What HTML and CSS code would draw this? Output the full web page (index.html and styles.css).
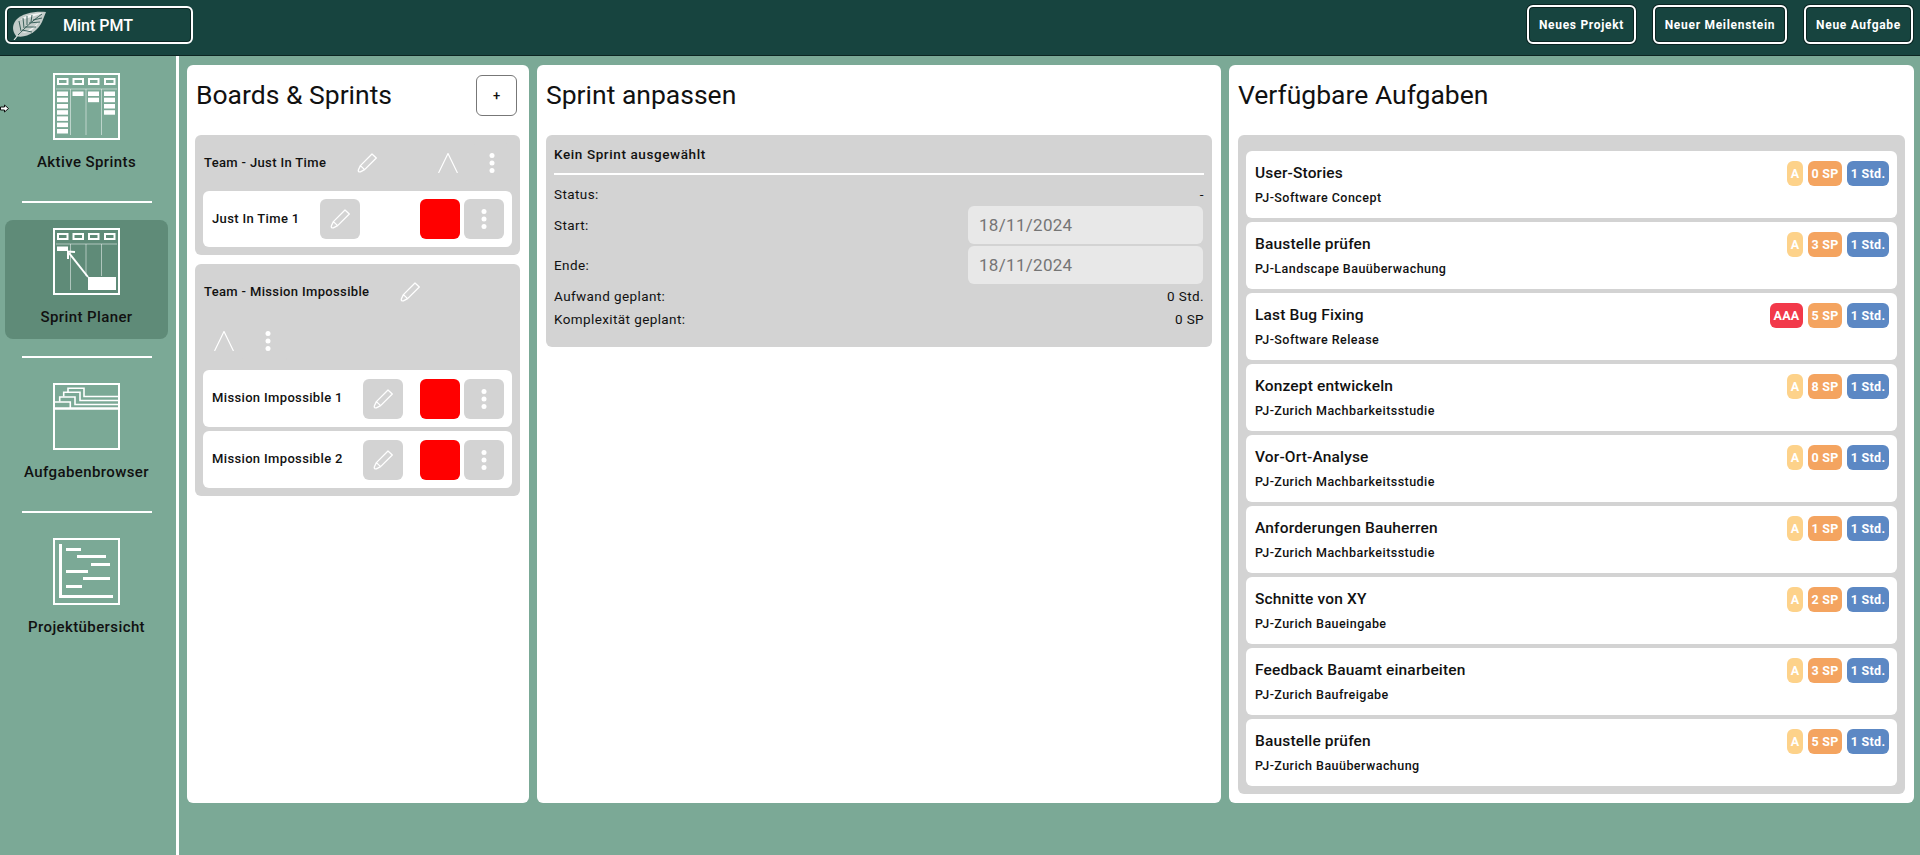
FILE: index.html
```html
<!DOCTYPE html>
<html lang="de">
<head>
  <meta charset="UTF-8" />
  <meta name="viewport" content="width=device-width, initial-scale=1" />
  <title>Mint PMT</title>
  <link rel="stylesheet" href="styles.css">
</head>
<body>

  <!-- shared icons -->
  <svg class="defs" aria-hidden="true">
    <symbol id="pencil" viewBox="0 0 20 20">
      <path d="M15 1 L19.3 5 L7.6 16.6 L3.4 12.6 Z M3.4 12.6 L1.4 16.8 Q0.8 19.4 3.4 18.8 L7.6 16.6" fill="none" stroke="#fff" stroke-width="1.3" stroke-linejoin="round" />
    </symbol>
    <symbol id="chevron" viewBox="0 0 20 20">
      <path d="M0.5 20 L10 0.5 L19.5 20" fill="none" stroke="#fff" stroke-width="1.2" />
    </symbol>
    <symbol id="dots" viewBox="0 0 20 20">
      <circle cx="10" cy="2.5" r="2.5" fill="#fff" />
      <circle cx="10" cy="10" r="2.5" fill="#fff" />
      <circle cx="10" cy="17.5" r="2.5" fill="#fff" />
    </symbol>
    <symbol id="board-head" viewBox="0 0 67 67">
      <rect x="1" y="1" width="65" height="65" fill="none" stroke="#fff" stroke-width="2" />
      <g fill="none" stroke="#fff" stroke-width="2">
        <rect x="5" y="6" width="9.5" height="5" />
        <rect x="20.5" y="6" width="9.5" height="5" />
        <rect x="36" y="6" width="9.5" height="5" />
        <rect x="52" y="6" width="9.5" height="5" />
      </g>
      <path d="M3 16 H64" stroke="#fff" stroke-opacity=".5" stroke-width="1" />
    </symbol>
  </svg>

  <header class="topbar">
    <div class="logo-btn">
      <svg class="leaf" viewBox="0 0 34 29">
        <path d="M34 1 C24 0 10 2 4 9 C0 14 0 20 4 25 C14 28 26 20 30 11 Z" fill="#c3ccc9" />
        <path d="M31 2 C24 2 13 4 8 9 C12 8 20 6 31 2 Z M27 11 C22 16 16 20 10 22 C16 22 23 18 27 11 Z" fill="#f2f5f4" />
        <path d="M2 29 L6 24 C12 18 20 10 30 3 M9 20 L7 10 M12 17 L11 7 M15 14 L15 5 M19 11 L20 4 M10 19 L20 21 M13 16 L24 16 M17 12 L28 11 M21 9 L30 7" fill="none" stroke="#2c5650" stroke-width=".9" />
        <path d="M6 24 L2 29" stroke="#dfe5e3" stroke-width="1.2" />
      </svg>
      <span>Mint PMT</span>
    </div>
    <div class="top-actions">
      <button class="top-btn btn-projekt">Neues Projekt</button>
      <button class="top-btn btn-meilenstein">Neuer Meilenstein</button>
      <button class="top-btn btn-aufgabe">Neue Aufgabe</button>
    </div>
  </header>

  <div class="layout">
    <nav class="sidebar">
      <a class="nav-item">
        <svg class="nav-icon" viewBox="0 0 67 67">
          <use href="#board-head" />
          <path d="M17.5 16 V62 M33 16 V62 M48.5 16 V62" stroke="#fff" stroke-opacity=".5" stroke-width="1" />
          <g fill="#fff">
            <rect x="4" y="18.5" width="11" height="4.5" />
            <rect x="4" y="24.7" width="11" height="4.5" />
            <rect x="4" y="31" width="11" height="4.5" />
            <rect x="4" y="37.2" width="11" height="4.5" />
            <rect x="4" y="43.4" width="11" height="4.5" />
            <rect x="4" y="49.6" width="11" height="4.5" />
            <rect x="4" y="56" width="11" height="4.5" />
            <rect x="19.5" y="18.5" width="11" height="4.5" />
            <rect x="35" y="18.5" width="11" height="4.5" />
            <rect x="35" y="24.7" width="11" height="4.5" />
            <rect x="51" y="18.5" width="11" height="4.5" />
            <rect x="51" y="24.7" width="11" height="4.5" />
            <rect x="51" y="31" width="11" height="4.5" />
            <rect x="51" y="37.2" width="11" height="4.5" />
          </g>
        </svg>
        <span>Aktive Sprints</span>
      </a>
      <hr class="nav-rule">
      <a class="nav-item active">
        <svg class="nav-icon" viewBox="0 0 67 67">
          <use href="#board-head" />
          <path d="M17.5 16 V62 M33 16 V48 M48.5 16 V48" stroke="#fff" stroke-opacity=".5" stroke-width="1" />
          <rect x="4" y="18.5" width="11" height="4.5" fill="#fff" />
          <rect x="35" y="49" width="28" height="13" fill="#fff" />
          <path d="M35 49 L16 25" stroke="#fff" stroke-width="2" />
          <path d="M15 31 L15 23.5 L22 24" fill="none" stroke="#fff" stroke-width="2" />
        </svg>
        <span>Sprint Planer</span>
      </a>
      <hr class="nav-rule">
      <a class="nav-item">
        <svg class="nav-icon" viewBox="0 0 67 67">
          <rect x="1" y="1" width="65" height="65" fill="none" stroke="#fff" stroke-width="2" />
          <path d="M1 25.5 H66" stroke="#fff" stroke-width="2.4" />
          <path d="M2 19 H17.3 V25.5" fill="none" stroke="#fff" stroke-width="1.6" />
          <path d="M6.7 18.5 V14 H22 V21.5 H66" fill="none" stroke="#fff" stroke-width="1.6" />
          <path d="M10.7 13.5 V9.3 H27 V17.5 H66" fill="none" stroke="#fff" stroke-width="1.6" />
          <path d="M15 9 V5.3 H31 V13.5 H66" fill="none" stroke="#fff" stroke-width="1.6" />
        </svg>
        <span>Aufgabenbrowser</span>
      </a>
      <hr class="nav-rule">
      <a class="nav-item">
        <svg class="nav-icon" viewBox="0 0 67 67">
          <rect x="1" y="1" width="65" height="65" fill="none" stroke="#fff" stroke-width="2" />
          <g fill="#fff">
            <rect x="6" y="6" width="3" height="54" />
            <rect x="6" y="57" width="54" height="3" />
            <rect x="13" y="10" width="15" height="3" />
            <rect x="24" y="17" width="29" height="3" />
            <rect x="38" y="25" width="19" height="3" />
            <rect x="13" y="32" width="22" height="3" />
            <rect x="30" y="39" width="27" height="3" />
            <rect x="13" y="47" width="16" height="3" />
          </g>
        </svg>
        <span>Projektübersicht</span>
      </a>
    </nav>

    <main class="panels">
      <!-- Boards -->
      <section class="panel">
        <div class="panel-head">
          <h2>Boards &amp; Sprints</h2>
          <button class="add-btn">+</button>
        </div>

        <div class="team">
          <div class="team-head">
            <div class="team-title">
              <span class="label">Team - Just In Time</span>
              <span class="icon-tile plain"><svg><use href="#pencil" /></svg></span>
            </div>
            <div class="team-tools">
              <span class="icon-tile plain"><svg><use href="#chevron" /></svg></span>
              <span class="icon-tile plain"><svg><use href="#dots" /></svg></span>
            </div>
          </div>
          <div class="sprint">
            <span class="sprint-name label">Just In Time 1</span>
            <span class="icon-tile"><svg><use href="#pencil" /></svg></span>
            <span class="red-tile"></span>
            <span class="icon-tile"><svg><use href="#dots" /></svg></span>
          </div>
        </div>

        <div class="team team-wrapped">
          <div class="team-head">
            <div class="team-title">
              <span class="label">Team - Mission Impossible</span>
              <span class="icon-tile plain"><svg><use href="#pencil" /></svg></span>
            </div>
            <div class="team-tools">
              <span class="icon-tile plain"><svg><use href="#chevron" /></svg></span>
              <span class="icon-tile plain"><svg><use href="#dots" /></svg></span>
            </div>
          </div>
          <div class="sprint">
            <span class="sprint-name label">Mission Impossible 1</span>
            <span class="icon-tile"><svg><use href="#pencil" /></svg></span>
            <span class="red-tile"></span>
            <span class="icon-tile"><svg><use href="#dots" /></svg></span>
          </div>
          <div class="sprint">
            <span class="sprint-name label">Mission Impossible 2</span>
            <span class="icon-tile"><svg><use href="#pencil" /></svg></span>
            <span class="red-tile"></span>
            <span class="icon-tile"><svg><use href="#dots" /></svg></span>
          </div>
        </div>
      </section>

      <!-- Sprint details -->
      <section class="panel">
        <div class="panel-head">
          <h2>Sprint anpassen</h2>
        </div>
        <div class="detail-box">
          <div class="detail-title">Kein Sprint ausgewählt</div>
          <div class="detail-row"><span>Status:</span><span>-</span></div>
          <div class="detail-row field"><span>Start:</span><div class="date-input">18/11/2024</div></div>
          <div class="detail-row field"><span>Ende:</span><div class="date-input">18/11/2024</div></div>
          <div class="detail-row planned"><span>Aufwand geplant:</span><span>0 Std.</span></div>
          <div class="detail-row"><span>Komplexität geplant:</span><span>0 SP</span></div>
        </div>
      </section>

      <!-- Tasks -->
      <section class="panel">
        <div class="panel-head">
          <h2>Verfügbare Aufgaben</h2>
        </div>
        <div class="task-list">
          <div class="task">
            <div class="task-top"><span class="task-name">User-Stories</span><span class="badge prio">A</span><span class="badge sp">0 SP</span><span class="badge hours">1 Std.</span></div>
            <div class="task-project">PJ-Software Concept</div>
          </div>
          <div class="task">
            <div class="task-top"><span class="task-name">Baustelle prüfen</span><span class="badge prio">A</span><span class="badge sp">3 SP</span><span class="badge hours">1 Std.</span></div>
            <div class="task-project">PJ-Landscape Bauüberwachung</div>
          </div>
          <div class="task">
            <div class="task-top"><span class="task-name">Last Bug Fixing</span><span class="badge prio-high">AAA</span><span class="badge sp">5 SP</span><span class="badge hours">1 Std.</span></div>
            <div class="task-project">PJ-Software Release</div>
          </div>
          <div class="task">
            <div class="task-top"><span class="task-name">Konzept entwickeln</span><span class="badge prio">A</span><span class="badge sp">8 SP</span><span class="badge hours">1 Std.</span></div>
            <div class="task-project">PJ-Zurich Machbarkeitsstudie</div>
          </div>
          <div class="task">
            <div class="task-top"><span class="task-name">Vor-Ort-Analyse</span><span class="badge prio">A</span><span class="badge sp">0 SP</span><span class="badge hours">1 Std.</span></div>
            <div class="task-project">PJ-Zurich Machbarkeitsstudie</div>
          </div>
          <div class="task">
            <div class="task-top"><span class="task-name">Anforderungen Bauherren</span><span class="badge prio">A</span><span class="badge sp">1 SP</span><span class="badge hours">1 Std.</span></div>
            <div class="task-project">PJ-Zurich Machbarkeitsstudie</div>
          </div>
          <div class="task">
            <div class="task-top"><span class="task-name">Schnitte von XY</span><span class="badge prio">A</span><span class="badge sp">2 SP</span><span class="badge hours">1 Std.</span></div>
            <div class="task-project">PJ-Zurich Baueingabe</div>
          </div>
          <div class="task">
            <div class="task-top"><span class="task-name">Feedback Bauamt einarbeiten</span><span class="badge prio">A</span><span class="badge sp">3 SP</span><span class="badge hours">1 Std.</span></div>
            <div class="task-project">PJ-Zurich Baufreigabe</div>
          </div>
          <div class="task">
            <div class="task-top"><span class="task-name">Baustelle prüfen</span><span class="badge prio">A</span><span class="badge sp">5 SP</span><span class="badge hours">1 Std.</span></div>
            <div class="task-project">PJ-Zurich Bauüberwachung</div>
          </div>
        </div>
      </section>
    </main>
  </div>

  <!-- mouse pointer caught in the screenshot -->
  <svg class="pointer" viewBox="0 0 9 9">
    <path d="M0.5 3 H4.5 V1 L8.5 4.5 L4.5 8 V6 H0.5 Z" fill="#fff" stroke="#111" stroke-width="1" />
  </svg>

</body>
</html>
```

FILE: styles.css
```css
* {
  box-sizing: border-box;
}

body {
  margin: 0;
  height: 100vh;
  overflow: hidden;
  font-family: Roboto, 'Liberation Sans', sans-serif;
  background: #7ba996;
  color: #111;
  display: flex;
  flex-direction: column;
}

.defs {
  position: absolute;
  width: 0;
  height: 0;
}

.pointer {
  position: absolute;
  left: 0;
  top: 104px;
  width: 9px;
  height: 9px;
}

/* top bar */
.topbar {
  height: 56px;
  flex: none;
  background: #17443f;
  border-bottom: 1px solid #0c2522;
  display: flex;
  align-items: flex-start;
  justify-content: space-between;
  padding: 6px 7px 0 5px;
}

.logo-btn {
  width: 188px;
  height: 38px;
  border: 2px solid #fff;
  border-radius: 6px;
  box-shadow: inset 0 0 0 1px #0c2522;
  display: flex;
  align-items: center;
  padding-left: 5px;
  color: #fff;
  font-size: 16px;
  font-weight: 500;
}

.leaf {
  width: 34px;
  height: 29px;
  margin-right: 17px;
}

.top-actions {
  display: flex;
}

.top-btn {
  height: 39px;
  margin-top: -1px;
  background: transparent;
  border: 2px solid #fff;
  border-radius: 6px;
  box-shadow: inset 0 0 0 1px #0c2522, 0 0 0 1px #0c2522;
  color: #fff;
  font-family: inherit;
  font-size: 12px;
  font-weight: 700;
  letter-spacing: 0.7px;
  padding: 0;
}

.btn-projekt {
  width: 109px;
  margin-right: 17px;
}

.btn-meilenstein {
  width: 134px;
  margin-right: 17px;
}

.btn-aufgabe {
  width: 109px;
}

/* sidebar */
.layout {
  flex: 1;
  display: flex;
  min-height: 0;
}

.sidebar {
  width: 179px;
  flex: none;
  border-right: 3px solid #fff;
  padding: 9px 8px 0 5px;
  display: flex;
  flex-direction: column;
}

.nav-item {
  height: 119px;
  flex: none;
  border-radius: 8px;
  display: flex;
  flex-direction: column;
  align-items: center;
  padding-top: 8px;
  font-size: 15px;
  font-weight: 500;
  color: #111;
}

.nav-item.active {
  background: #5f8b78;
}

.nav-icon {
  width: 67px;
  height: 67px;
  margin-bottom: 13px;
}

.nav-item span {
  line-height: 18px;
  letter-spacing: 0.4px;
}

.nav-rule {
  width: 130px;
  height: 2px;
  margin: 17px 0 17px 17px;
  border: none;
  background: #fff;
  flex: none;
}

/* panels */
.panels {
  flex: 1;
  display: grid;
  grid-template-columns: 342px 684px 685px;
  column-gap: 8px;
  align-items: start;
  padding: 9px 0 0 8px;
}

.panel {
  height: 738px;
  background: #fff;
  border-radius: 6px;
  padding: 10px 9px 8px;
}

.panel-head {
  height: 41px;
  margin-bottom: 19px;
  display: flex;
  align-items: center;
  justify-content: space-between;
}

.panel-head h2 {
  margin: 0 0 2px;
  font-size: 26.5px;
  font-weight: 400;
  color: #111;
}

.add-btn {
  width: 41px;
  height: 41px;
  margin-right: 3px;
  background: #fff;
  border: 1px solid #777;
  border-radius: 6px;
  font-family: inherit;
  font-size: 13px;
  font-weight: 500;
  color: #111;
  padding: 0;
}

/* team boards */
.team {
  background: #d3d3d3;
  border-radius: 6px;
  padding: 8px;
  margin: 0 0 9px -1px;
}

.team-head {
  display: flex;
  flex-wrap: wrap;
  justify-content: space-between;
  gap: 9px 8px;
  padding-left: 1px;
  margin-bottom: 8px;
}

.team-wrapped .team-head {
  margin-bottom: 9px;
}

.team-title {
  display: flex;
  align-items: center;
  gap: 21px;
}

.label {
  font-size: 13px;
  font-weight: 500;
  letter-spacing: 0.35px;
  white-space: nowrap;
  padding-bottom: 2px;
}

.team-tools {
  display: flex;
  gap: 4px;
}

.icon-tile {
  width: 40px;
  height: 40px;
  flex: none;
  background: #d3d3d3;
  border-radius: 6px;
  display: flex;
  align-items: center;
  justify-content: center;
}

.icon-tile svg {
  width: 20px;
  height: 20px;
}

.sprint {
  min-height: 56px;
  background: #fff;
  border-radius: 6px;
  display: flex;
  align-items: center;
  padding: 8px 8px 8px 9px;
}

.sprint-name {
  margin-right: 20px;
}

.team-wrapped .sprint {
  min-height: 57px;
}

.sprint + .sprint {
  margin-top: 4px;
}

.red-tile {
  width: 40px;
  height: 40px;
  flex: none;
  background: #ff0000;
  border-radius: 6px;
  margin-left: auto;
  margin-right: 4px;
}

/* sprint details */
.detail-box {
  height: 212px;
  background: #d3d3d3;
  border-radius: 6px;
  padding: 10px 8px;
  font-size: 13.5px;
  font-weight: 400;
}

.detail-title {
  font-weight: 500;
  line-height: 18px;
  letter-spacing: 0.6px;
  padding-bottom: 10px;
  border-bottom: 2px solid #fff;
  margin-bottom: 9px;
}

.detail-row {
  height: 20px;
  display: flex;
  align-items: center;
  justify-content: space-between;
  margin-bottom: 2px;
  letter-spacing: 0.4px;
}

.detail-row.field {
  height: 38px;
}

.detail-row.planned {
  margin-bottom: 3px;
}

.date-input {
  width: 235px;
  height: 38px;
  margin-right: 1px;
  background: #e8e8e8;
  border-radius: 6px;
  color: #757575;
  font-size: 17px;
  line-height: 38px;
  padding-left: 11px;
  letter-spacing: 0.3px;
}

/* task list */
.task-list {
  background: #d3d3d3;
  border-radius: 6px;
  padding: 16px 8px 8px;
  height: 659px;
  display: flex;
  flex-direction: column;
  gap: 4px;
}

.task {
  height: 67px;
  flex: none;
  background: #fff;
  border-radius: 6px;
  padding: 10px 8px 0 9px;
}

.task-top {
  display: flex;
  align-items: center;
  height: 25px;
  gap: 5px;
}

.task-name {
  margin-right: auto;
  padding-bottom: 2px;
  font-size: 15.5px;
  font-weight: 500;
  letter-spacing: 0.16px;
}

.task-project {
  margin-top: 4px;
  font-size: 12.5px;
  font-weight: 500;
  line-height: 16px;
  letter-spacing: 0.45px;
}

.badge {
  height: 25px;
  border-radius: 6px;
  color: #fff;
  font-size: 12.5px;
  font-weight: 700;
  line-height: 25px;
  text-align: center;
  letter-spacing: 0.3px;
}

.prio {
  width: 16px;
  background: #fdd28a;
}

.prio-high {
  width: 33px;
  background: #f2394a;
}

.sp {
  width: 34px;
  background: #f4a460;
}

.hours {
  width: 42px;
  background: #5c88c4;
}
```
